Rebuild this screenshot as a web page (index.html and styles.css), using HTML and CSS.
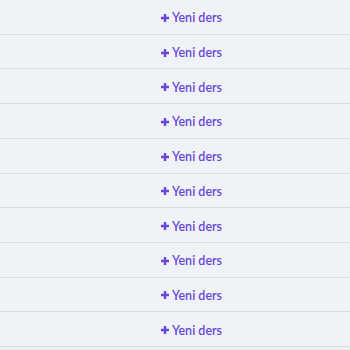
FILE: index.html
```html
<!DOCTYPE html>
<html lang="tr">
<head>
    <meta charset="UTF-8">
    <meta name="viewport" content="width=device-width, initial-scale=1.0">
    <title>Dersler</title>
    <link rel="stylesheet" href="styles.css">
</head>
<body>
    <div class="slots">
        <button class="slot" type="button"><svg class="plus" viewBox="0 0 10 10"><path d="M5 1v8M1 5h8"/></svg>Yeni ders</button>
        <button class="slot" type="button"><svg class="plus" viewBox="0 0 10 10"><path d="M5 1v8M1 5h8"/></svg>Yeni ders</button>
        <button class="slot" type="button"><svg class="plus" viewBox="0 0 10 10"><path d="M5 1v8M1 5h8"/></svg>Yeni ders</button>
        <button class="slot" type="button"><svg class="plus" viewBox="0 0 10 10"><path d="M5 1v8M1 5h8"/></svg>Yeni ders</button>
        <button class="slot" type="button"><svg class="plus" viewBox="0 0 10 10"><path d="M5 1v8M1 5h8"/></svg>Yeni ders</button>
        <button class="slot" type="button"><svg class="plus" viewBox="0 0 10 10"><path d="M5 1v8M1 5h8"/></svg>Yeni ders</button>
        <button class="slot" type="button"><svg class="plus" viewBox="0 0 10 10"><path d="M5 1v8M1 5h8"/></svg>Yeni ders</button>
        <button class="slot" type="button"><svg class="plus" viewBox="0 0 10 10"><path d="M5 1v8M1 5h8"/></svg>Yeni ders</button>
        <button class="slot" type="button"><svg class="plus" viewBox="0 0 10 10"><path d="M5 1v8M1 5h8"/></svg>Yeni ders</button>
        <button class="slot" type="button"><svg class="plus" viewBox="0 0 10 10"><path d="M5 1v8M1 5h8"/></svg>Yeni ders</button>
    </div>
</body>
</html>
```

FILE: styles.css
```css
* {
    margin: 0;
    padding: 0;
    box-sizing: border-box;
}

body {
    background-color: #eef2f6;
    font-family: Lato, "Open Sans", sans-serif;
}

.slots {
    display: flex;
    flex-direction: column;
    height: 347px;
    box-shadow: 0 2px 2px rgba(0, 0, 0, 0.08);
}

.slot {
    flex: 1;
    display: flex;
    align-items: center;
    justify-content: center;
    padding-left: 32px;
    padding-top: 2px;
    background-color: #eff3f7;
    border: none;
    border-bottom: 1px solid #d8dde3;
    color: #6946d8;
    font-family: Lato, "Open Sans", sans-serif;
    font-size: 12.5px;
    font-weight: 600;
    cursor: pointer;
}

.plus {
    width: 10px;
    height: 10px;
    margin-right: 2px;
    stroke: currentColor;
    stroke-width: 2.4;
    fill: none;
}
```
